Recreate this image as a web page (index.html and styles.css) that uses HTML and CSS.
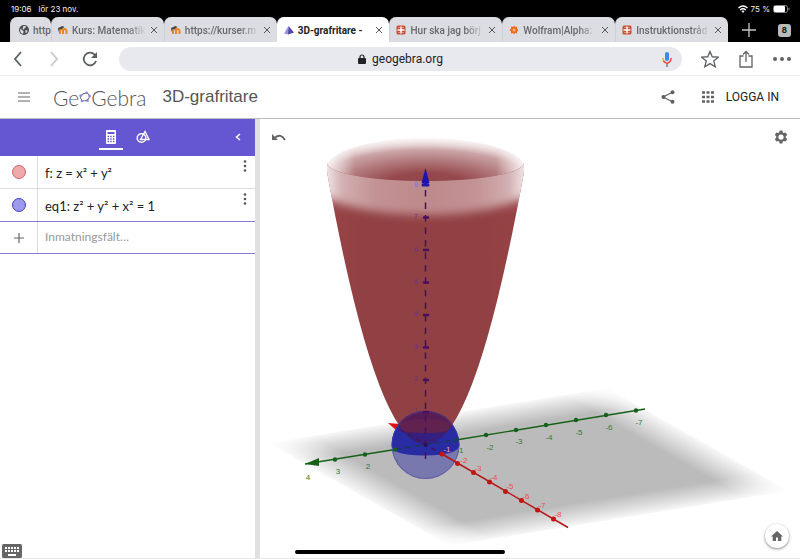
FILE: index.html
```html
<!DOCTYPE html>
<html lang="sv">
<head>
<meta charset="utf-8">
<meta name="viewport" content="width=device-width, initial-scale=1">
<title>3D-grafritare - GeoGebra</title>
<link rel="stylesheet" href="styles.css">
</head>
<body>
<div class="status">
  <span class="status-time">19:06</span><span>lör 23 nov.</span>
  <span class="status-right">
    <svg width="10" height="8" viewBox="0 0 20 16" fill="none" stroke="#fff" stroke-width="3"><path d="M1 6Q10-2 19 6M4.500 10Q10 5 15.500 10"/><path d="M7 12Q10 9.500 13 12L10 16z" fill="#fff" stroke="none"/></svg>
    75 %
    <svg width="17" height="8" viewBox="0 0 17 8"><rect x=".5" y=".5" width="14" height="7" rx="2" fill="none" stroke="#888"/><rect x="1" y="1" width="11" height="6" rx="1" fill="#fff"/><path d="M16 3v2" stroke="#888"/></svg>
  </span>
</div>

<nav class="tabs">
  <div class="tab tab-cut">
    <svg class="fav" viewBox="0 0 20 20"><circle cx="10" cy="10" r="10" fill="#4c4e52"/><path d="M3 7l4 4 2 1v3l-2 3C3 16 1 12 3 7zM9 2h4l1 3-3 1-1 3-3-1 1-3zM13 10l4 1-1 4-3 1z" fill="#dcdde3"/></svg>
    <a class="tab-title" href="#">http</a>
  </div>
  <div class="tab">
    <svg class="fav" viewBox="0 0 20 20"><path d="M4 18v-7q0-3 3-3t3 3v7m0-7q0-3 3-3t4 3v7" fill="none" stroke="#e98427" stroke-width="4"/><path d="M0 6l9-4 4 2-6 4-5 1v4H1z" fill="#444"/></svg>
    <a class="tab-title" href="#">Kurs: Matematik</a>
    <button class="close" aria-label="Stäng flik"><svg viewBox="0 0 8 8"><path d="M1 1l6 6M7 1L1 7"/></svg></button>
  </div>
  <div class="tab">
    <svg class="fav" viewBox="0 0 20 20"><path d="M4 18v-7q0-3 3-3t3 3v7m0-7q0-3 3-3t4 3v7" fill="none" stroke="#e98427" stroke-width="4"/><path d="M0 6l9-4 4 2-6 4-5 1v4H1z" fill="#444"/></svg>
    <a class="tab-title" href="#">https://kurser.m</a>
    <button class="close" aria-label="Stäng flik"><svg viewBox="0 0 8 8"><path d="M1 1l6 6M7 1L1 7"/></svg></button>
  </div>
  <div class="tab active">
    <svg class="fav" viewBox="0 0 20 20"><path d="M9 2L0 17l8 2z" fill="#9b94e6"/><path d="M9 2l11 13-12 4z" fill="#4d43a8"/></svg>
    <a class="tab-title" href="#">3D-grafritare -</a>
    <button class="close" aria-label="Stäng flik"><svg viewBox="0 0 8 8"><path d="M1 1l6 6M7 1L1 7"/></svg></button>
  </div>
  <div class="tab">
    <svg class="fav" viewBox="0 0 20 20"><rect x="1" y="1" width="18" height="18" rx="3" fill="#c94f32"/><path d="M3 10h14M10 3v14" stroke="#fff" stroke-width="3"/><path d="M4 5h4M12 5h4M4 15h4M12 15h4" stroke="#f3d3c8"/></svg>
    <a class="tab-title" href="#">Hur ska jag börj</a>
    <button class="close" aria-label="Stäng flik"><svg viewBox="0 0 8 8"><path d="M1 1l6 6M7 1L1 7"/></svg></button>
  </div>
  <div class="tab">
    <svg class="fav" viewBox="0 0 20 20"><path d="M10 1l2 3 4-1v4l3 3-3 3v4l-4-1-2 3-2-3-4 1v-4l-3-3 3-3V3l4 1z" fill="#f26a1b"/><circle cx="10" cy="10" r="3" fill="#f7b286"/></svg>
    <a class="tab-title" href="#">Wolfram|Alpha:</a>
    <button class="close" aria-label="Stäng flik"><svg viewBox="0 0 8 8"><path d="M1 1l6 6M7 1L1 7"/></svg></button>
  </div>
  <div class="tab">
    <svg class="fav" viewBox="0 0 20 20"><rect x="1" y="1" width="18" height="18" rx="3" fill="#c94f32"/><path d="M3 10h14M10 3v14" stroke="#fff" stroke-width="3"/><path d="M4 5h4M12 5h4M4 15h4M12 15h4" stroke="#f3d3c8"/></svg>
    <a class="tab-title" href="#">Instruktionstråd</a>
    <button class="close" aria-label="Stäng flik"><svg viewBox="0 0 8 8"><path d="M1 1l6 6M7 1L1 7"/></svg></button>
  </div>
  <div class="tab-tools">
    <button aria-label="Ny flik"><svg width="14" height="14" viewBox="0 0 14 14"><path d="M7 0v14M0 7h14" stroke="#c8c8cc" stroke-width="1.300"/></svg></button>
    <button class="tab-count">8</button>
  </div>
</nav>

<div class="toolbar">
  <button aria-label="Bakåt"><svg width="10" height="16" viewBox="0 0 10 16" fill="none" stroke="#5c5f63" stroke-width="1.800"><path d="M8 1L2 8l6 7"/></svg></button>
  <button aria-label="Framåt"><svg width="10" height="16" viewBox="0 0 10 16" fill="none" stroke="#c8c9cc" stroke-width="1.800"><path d="M2 1l6 7-6 7"/></svg></button>
  <button aria-label="Ladda om"><svg width="16" height="16" viewBox="0 0 16 16"><path d="M14 10A6.300 6.300 0 1 1 12.500 3.500L14 5" fill="none" stroke="#5c5f63" stroke-width="1.800"/><path d="M15 1v6H9z" fill="#5c5f63"/></svg></button>
  <div class="omnibox">
    <svg width="8" height="10" viewBox="0 0 8 10"><rect y="4" width="8" height="6" rx="1" fill="#222"/><path d="M2 5V3a2 2 0 0 1 4 0v2" fill="none" stroke="#222" stroke-width="1.200"/></svg>
    <input type="text" value="geogebra.org" aria-label="Adress">
    <button class="mic" aria-label="Röstsökning"><svg width="10" height="15" viewBox="0 0 10 15" fill="none"><rect x="3" width="4" height="9" rx="2" fill="#4285f4"/><path d="M1 6q0 2 1 4" stroke="#f4b400" stroke-width="1.500"/><path d="M1.500 9Q5 13 8 9.500" stroke="#ea4335" stroke-width="1.500"/><path d="M8 9.500Q9 8 9 6" stroke="#ea4335" stroke-width="1.500"/><path d="M5 11.500V15" stroke="#777" stroke-width="1.500"/></svg></button>
  </div>
  <button aria-label="Bokmärke"><svg width="18" height="18" viewBox="0 0 24 24"><path d="M12 2l3 7 8 .6-6 5.200 2 7.600-7-4.200-7 4.200 2-7.600-6-5.200L9 9z" fill="none" stroke="#606367" stroke-width="1.800"/></svg></button>
  <button aria-label="Dela sida"><svg width="14" height="18" viewBox="0 0 14 18" fill="none" stroke="#606367" stroke-width="1.300"><path d="M4.500 6H1v11h12V6H9.500M7 12V1.500M4 4.500l3-3 3 3"/></svg></button>
  <button aria-label="Mer"><svg width="18" height="4" viewBox="0 0 18 4" fill="#606367"><circle cx="2" cy="2" r="2"/><circle cx="9" cy="2" r="2"/><circle cx="16" cy="2" r="2"/></svg></button>
</div>

<header class="app-header">
  <button class="menu" aria-label="Meny"><svg width="12" height="10" viewBox="0 0 12 10"><path d="M0 1h12M0 5h12M0 9h12" stroke="#666" stroke-width="1.200"/></svg></button>
  <a class="logo" href="#" aria-label="GeoGebra"><span>Ge</span><svg width="12" height="12" viewBox="0 0 12 12"><ellipse cx="6" cy="6" rx="4.500" ry="3.600" transform="rotate(-25 6 6)" fill="none" stroke="#666"/><g fill="#8b85e8"><circle cx="7.500" cy="1.800" r="1.300"/><circle cx="10.600" cy="5" r="1.300"/><circle cx="8.500" cy="9.800" r="1.300"/><circle cx="3" cy="10" r="1.300"/><circle cx="1.500" cy="4.800" r="1.300"/></g></svg><span>Gebra</span></a>
  <h1>3D-grafritare</h1>
  <button class="share" aria-label="Dela"><svg width="14" height="14" viewBox="0 0 14 14"><path d="M12 2L2 7l10 5" fill="none" stroke="#606060" stroke-width="1.200"/><g fill="#606060"><circle cx="11.500" cy="2.200" r="2"/><circle cx="2.500" cy="7" r="2"/><circle cx="11.500" cy="11.800" r="2"/></g></svg></button>
  <button class="apps" aria-label="Appar"><svg width="12" height="12" viewBox="0 0 12 12"><path d="M0 1.500h12M0 6h12M0 10.500h12" stroke="#606060" stroke-width="2.600" stroke-dasharray="3 1.500"/></svg></button>
  <a class="login" href="#">LOGGA IN</a>
</header>

<main class="workspace">
  <section class="algebra">
    <div class="algebra-bar">
      <button class="view selected" aria-label="Algebra"><svg width="10" height="14" viewBox="0 0 10 14"><rect width="10" height="14" rx="1" fill="#fff"/><path d="M1.500 3h7" stroke="#6557d2" stroke-width="2"/><path d="M1.500 6.500h7M1.500 9h7M1.500 11.500h7" stroke="#6557d2" stroke-width="1.300" stroke-dasharray="1.500 1.200"/></svg></button>
      <button class="view" aria-label="Verktyg"><svg width="14" height="14" viewBox="0 0 14 14" fill="none" stroke="#fff" stroke-width="1.400"><circle cx="5.500" cy="8" r="4.300"/><path d="M9 1.500L4.500 9.500h8.500z"/></svg></button>
      <button class="collapse" aria-label="Dölj"><svg width="6" height="8" viewBox="0 0 6 8"><path d="M5 1L1.500 4 5 7" fill="none" stroke="#fff" stroke-width="1.500"/></svg></button>
    </div>
    <div class="row">
      <div class="mark"><button class="dot red" aria-label="Visa f"></button></div>
      <div class="formula">f: z = x² + y²</div>
      <button class="more" aria-label="Mer om f"><svg width="4" height="12" viewBox="0 0 4 12" fill="#555"><circle cx="2" cy="1.500" r="1.300"/><circle cx="2" cy="6" r="1.300"/><circle cx="2" cy="10.500" r="1.300"/></svg></button>
    </div>
    <div class="row">
      <div class="mark"><button class="dot blue" aria-label="Visa eq1"></button></div>
      <div class="formula">eq1: z² + y² + x² = 1</div>
      <button class="more" aria-label="Mer om eq1"><svg width="4" height="12" viewBox="0 0 4 12" fill="#555"><circle cx="2" cy="1.500" r="1.300"/><circle cx="2" cy="6" r="1.300"/><circle cx="2" cy="10.500" r="1.300"/></svg></button>
    </div>
    <div class="row entry">
      <label class="mark" for="entry"><svg width="10" height="10" viewBox="0 0 10 10"><path d="M5 0v10M0 5h10" stroke="#666" stroke-width="1.200"/></svg></label>
      <input id="entry" type="text" placeholder="Inmatningsfält…" aria-label="Inmatningsfält">
    </div>
    <button class="keyboard" aria-label="Tangentbord"><svg width="20" height="14" viewBox="0 0 20 14"><rect width="20" height="14" rx="1.500" fill="#666"/><path d="M3 4h14M3 7h14" stroke="#fff" stroke-width="2" stroke-dasharray="2 1"/><path d="M6 11h8" stroke="#fff" stroke-width="2"/></svg></button>
  </section>

  <section class="scene">
    <svg class="graph" viewBox="260 120 540 437" role="img" aria-label="3D-graf">
      <defs>
        <linearGradient id="fadeU"><stop offset="0" stop-color="#bbb" stop-opacity=".1"/><stop offset=".05" stop-color="#bbb" stop-opacity=".45"/><stop offset=".13" stop-color="#bbb"/><stop offset=".87" stop-color="#bbb"/><stop offset=".95" stop-color="#bbb" stop-opacity=".45"/><stop offset="1" stop-color="#bbb" stop-opacity=".1"/></linearGradient>
        <linearGradient id="fadeV" x2="0" y2="1"><stop offset="0" stop-color="#fff" stop-opacity=".1"/><stop offset=".07" stop-color="#fff" stop-opacity=".5"/><stop offset=".17" stop-color="#fff"/><stop offset=".83" stop-color="#fff"/><stop offset=".93" stop-color="#fff" stop-opacity=".5"/><stop offset="1" stop-color="#fff" stop-opacity=".1"/></linearGradient>
        <mask id="planeMask" maskContentUnits="objectBoundingBox"><rect width="1" height="1" fill="url(#fadeV)"/></mask>
        <radialGradient id="inner" gradientUnits="userSpaceOnUse" cx="0" cy="0" r="1" gradientTransform="translate(425.500 188) scale(150 51)"><stop offset="0" stop-color="#914447"/><stop offset=".3" stop-color="#96494d"/><stop offset=".55" stop-color="#b27a7d"/><stop offset=".75" stop-color="#cba5a7"/><stop offset="1" stop-color="#f6eeee" stop-opacity=".3"/></radialGradient>
        <linearGradient id="sides" gradientUnits="userSpaceOnUse" x1="327" x2="524" y1="0" y2="0"><stop offset="0" stop-color="#fff" stop-opacity=".8"/><stop offset=".14" stop-color="#fff" stop-opacity="0"/><stop offset=".86" stop-color="#fff" stop-opacity="0"/><stop offset="1" stop-color="#fff" stop-opacity=".8"/></linearGradient>
        <linearGradient id="cup" x2="1"><stop offset="0" stop-color="#9c4649"/><stop offset=".2" stop-color="#914043"/><stop offset=".8" stop-color="#914043"/><stop offset="1" stop-color="#9a4447"/></linearGradient>
        <linearGradient id="band" gradientUnits="userSpaceOnUse" x1="327" x2="524" y1="0" y2="0"><stop offset="0" stop-color="#f1e7e8"/><stop offset=".07" stop-color="#d3b0b2"/><stop offset=".25" stop-color="#c29193"/><stop offset=".5" stop-color="#be8a8b"/><stop offset=".75" stop-color="#c29193"/><stop offset=".93" stop-color="#d3b0b2"/><stop offset="1" stop-color="#f1e7e8"/></linearGradient>
        <filter id="soft" x="-20%" y="-60%" width="140%" height="220%"><feGaussianBlur stdDeviation="5"/></filter>
        <clipPath id="cupClip"><path d="M327 163A98.500 18 0 0 0 524 163L524 172Q425.500 718 327 172z"/></clipPath>
        <clipPath id="paraClip"><path d="M327 172Q425.500 718 524 172z"/></clipPath>
        <clipPath id="ballClip"><circle cx="425.500" cy="445" r="34"/></clipPath>
      </defs>

      <!-- ground plane: a unit square sheared into perspective -->
      <rect width="1" height="1" transform="matrix(339 -55 182 103 268 443)" fill="url(#fadeU)" mask="url(#planeMask)"/>

      <g stroke="#166116" stroke-width="1.400" fill="#166116">
        <path d="M305 464L395 449.500M459 439.500L645 409"/>
        <path d="M305 464l14-6v8z" stroke="none"/>
      </g>
      <path d="M388 423l12 1-3 7z" fill="#e01515"/>

      <path d="M327 168A98.500 30 0 0 1 524 168L524 164A98.500 18 0 0 1 327 164z" fill="url(#inner)"/>
      <path d="M327 168A98.500 30 0 0 1 524 168L524 164A98.500 18 0 0 1 327 164z" fill="url(#sides)"/>
      <g clip-path="url(#cupClip)">
        <path d="M320 150h210v300H320z" fill="url(#cup)"/>
        <path d="M300 120H550V180C530 203 480 215 425.500 215S320 203 300 180z" fill="url(#band)" filter="url(#soft)"/>
      </g>

      <!-- sphere, with the part inside the paraboloid darkened -->
      <circle cx="425.500" cy="445" r="34" fill="#5858a8" opacity=".68"/>
      <g clip-path="url(#ballClip)">
        <path d="M391 410h69v35q-2 10-34.500 10.500T391 445z" fill="#292ba2"/>
        <g clip-path="url(#paraClip)">
          <path d="M385 405h80v50h-80z" fill="#352080"/>
          <path d="M385 405h80v24q-8 4-39.500 4T385 429z" fill="#571d52"/>
          <ellipse cx="425.500" cy="426" rx="28" ry="7" fill="#672650" opacity=".6"/>
        </g>
      </g>
      <circle cx="425.500" cy="445" r="33.500" fill="none" stroke="#4545a0" stroke-width=".8" opacity=".7"/>

      <path d="M395 449.500L459 439.500" stroke="#153c53" stroke-width="1.400" stroke-dasharray="6 4"/>
      <path d="M400 430L442 454" stroke="#451552" stroke-width="1.400" stroke-dasharray="5 4"/>
      <path d="M425.500 190V464" stroke="#46105c" stroke-width="1.500" stroke-dasharray="6.500 6"/>
      <path d="M425.500 168l4 15q-4 2-8 0z" fill="#1d13b4"/>
      <path d="M423 185h5" stroke="#2418a6" stroke-width="3" stroke-linecap="round"/>
      <path d="M424 217.500h4M424 250h4M424 282.500h4M424 315h4M424 347.500h4M424 380h4M424 412h4" stroke="#4b0d62" stroke-width="2.500" stroke-linecap="round"/>
      <g class="z-labels"><text class="z-top" x="416" y="187">8</text><text x="416" y="219">7</text><text x="416" y="252">6</text><text x="416" y="284">5</text><text x="416" y="316">4</text><text x="416" y="349">3</text><text x="416" y="381">2</text><text x="416" y="413">1</text></g>

      <g fill="#12601a"><circle cx="335" cy="459.500" r="2.200"/><circle cx="365" cy="454.500" r="2.200"/><circle cx="395" cy="449.500" r="2.200"/><circle cx="456" cy="440" r="2.200" fill="#163f5c"/><circle cx="486" cy="435" r="2.200"/><circle cx="516" cy="430" r="2.200"/><circle cx="546" cy="425" r="2.200"/><circle cx="576" cy="420" r="2.200"/><circle cx="606" cy="415" r="2.200"/><circle cx="636" cy="410.500" r="2.200"/><circle cx="425.500" cy="445" r="2" fill="#27105c"/></g>
      <g class="y-labels"><text x="308" y="480">4</text><text x="338" y="474">3</text><text x="368" y="469">2</text><text x="398" y="465" opacity=".35">1</text><text x="460" y="453">-1</text><text x="490" y="450">-2</text><text x="519" y="444">-3</text><text x="549" y="440">-4</text><text x="579" y="435">-5</text><text x="609" y="430">-6</text><text x="639" y="425">-7</text></g>

      <path d="M442 454L568 527.500" stroke="#b51616" stroke-width="1.500"/>
      <g fill="#c01616"><circle cx="442" cy="454" r="2.500"/><circle cx="457.500" cy="463.500" r="2.500"/><circle cx="473.500" cy="472.500" r="2.500"/><circle cx="489.500" cy="482" r="2.500"/><circle cx="505.500" cy="491.500" r="2.500"/><circle cx="521.500" cy="500.500" r="2.500"/><circle cx="537.500" cy="510" r="2.500"/><circle cx="553.500" cy="519" r="2.500"/></g>
      <g class="x-labels"><text class="x-first" x="447" y="452">-1</text><text x="464" y="463">-2</text><text x="478" y="471">-3</text><text x="494" y="480">-4</text><text x="510" y="489">-5</text><text x="526" y="499">-6</text><text x="542" y="508">-7</text><text x="558" y="517">-8</text></g>
    </svg>
    <button class="undo" aria-label="Ångra"><svg width="14" height="8" viewBox="0 0 14 8"><path d="M3 4.500Q9 0 13 7" fill="none" stroke="#666" stroke-width="1.800"/><path d="M0 1v6h6z" fill="#666"/></svg></button>
    <button class="settings" aria-label="Inställningar"><svg width="14" height="14" viewBox="0 0 24 24"><path fill="#666" fill-rule="evenodd" d="M9.500 1h5l.6 3.200 2 1.100 3-1.100 2.500 4.300-2.400 2.100v2.600l2.400 2.300-2.500 4.300-3-1.100-2 1.100-.6 3.200h-5l-.6-3.200-2-1.100-3 1.100-2.500-4.300 2.400-2.300v-2.600L1.400 8.500l2.500-4.300 3 1.100 2-1.100zM12 7.500a4.500 4.500 0 1 0 0 9a4.500 4.500 0 1 0 0-9z"/></svg></button>
    <button class="home" aria-label="Standardvy"><svg width="12" height="10" viewBox="0 0 12 10"><path d="M6 0L0 5.500h1.700V10H5V6.500h2V10h3.300V5.500H12z" fill="#666"/></svg></button>
  </section>
</main>
<div class="home-indicator"></div>
</body>
</html>
```
FILE: styles.css
```css
* { box-sizing: border-box; }
body {
  margin: 0;
  min-height: 100vh;
  display: flex;
  flex-direction: column;
  font-family: Inter, "Liberation Sans", sans-serif;
  background: #fff;
  border-bottom: 1px solid #e6e6e6;
  position: relative;
}
button {
  border: 0;
  padding: 0;
  margin: 0;
  background: none;
  font: inherit;
  color: inherit;
  display: flex;
  align-items: center;
  justify-content: center;
}
a { color: inherit; text-decoration: none; }
svg { display: block; flex: none; }
input {
  border: 0;
  padding: 0;
  margin: 0;
  background: none;
  outline: 0;
  min-width: 0;
}

.status {
  background: #000;
  color: #f0f0f0;
  height: 17px;
  display: flex;
  align-items: center;
  padding: 0 10px 0 11px;
  font-size: 8px;
}
.status-time { margin-right: 7px; }
.status-right { margin-left: auto; display: flex; align-items: center; gap: 3px; }

.tabs {
  height: 25px;
  background: #000;
  display: flex;
  padding-left: 10px;
}
.tab {
  flex: 1 1 0;
  min-width: 0;
  display: flex;
  align-items: center;
  gap: 4px;
  padding: 1px 6px 0 6px;
  background: #dcdde3;
  border-left: 1px solid #cfd0d6;
  border-radius: 7px 7px 0 0;
  font-family: Roboto, sans-serif;
  font-size: 10px;
  font-weight: 500;
  color: #66686d;
}
.tab-cut { flex: 0 0 41px; padding: 1px 0 0 8px; }
.tab.active { background: #fff; border-color: #fff; color: #222; font-weight: 700; }
.fav { width: 10px; height: 10px; }
.tab-title {
  flex: 1;
  min-width: 0;
  overflow: hidden;
  white-space: nowrap;
  mask-image: linear-gradient(to right, #000 75%, transparent);
}
.tab-cut .tab-title, .active .tab-title { mask-image: none; }
.close { width: 8px; height: 16px; stroke: #55575b; stroke-width: 1; }
.close svg { width: 8px; height: 8px; }
.tab-tools {
  flex: 0 0 72px;
  display: flex;
  align-items: center;
  justify-content: flex-end;
  gap: 22px;
  padding: 1px 9px 0 0;
}
.tab-count {
  width: 13px;
  height: 13px;
  border-radius: 3px;
  background: #b9b9bc;
  color: #111;
  font-size: 8px;
  font-weight: 700;
}

.toolbar {
  height: 34px;
  display: flex;
  align-items: center;
  border-bottom: 1px solid #eee;
}
.toolbar > button { width: 36px; height: 32px; }
.omnibox {
  flex: 1;
  height: 24px;
  margin: 0 10px 0 11px;
  border-radius: 12px;
  background: #e8e9ee;
  display: flex;
  align-items: center;
  justify-content: center;
  gap: 6px;
  position: relative;
}
.omnibox input { font: 12px Roboto, sans-serif; color: #222; field-sizing: content; }
.mic { position: absolute; right: 10px; top: 5px; }

.app-header {
  height: 43px;
  display: flex;
  align-items: center;
  padding: 0 21px 0 18px;
  border-bottom: 1px solid #bdbdbd;
  color: #555;
}
.menu { width: 12px; height: 24px; margin-right: 23px; }
.logo {
  display: flex;
  align-items: center;
  font: 300 21px Lato, sans-serif;
  color: #555;
  margin-right: 16px;
}
.app-header h1 { margin: 0; font: 400 17px "Liberation Sans", sans-serif; color: #555; }
.share { margin-left: auto; margin-right: 27px; }
.apps { margin-right: 12px; }
.login { font: 12px Roboto, sans-serif; color: #222; white-space: nowrap; }

.workspace { flex: 1; display: flex; min-height: 0; }
.algebra {
  flex: 0 0 calc(32% - 1px);
  position: relative;
  display: flex;
  flex-direction: column;
}
.algebra-bar {
  height: 37px;
  background: #6557d2;
  display: flex;
  justify-content: center;
  gap: 8px;
  padding-right: 2px;
  position: relative;
}
.view { width: 24px; height: 31px; padding-top: 6px; border-bottom: 2px solid transparent; }
.view.selected { border-color: #fff; }
.collapse { position: absolute; right: 14px; top: 10px; width: 6px; height: 16px; }
.row {
  height: 33px;
  display: flex;
  border-bottom: 1px solid #ddd;
}
.row:nth-child(3) { border-bottom-color: #8478dc; }
.mark {
  width: 38px;
  border-right: 1px solid #ddd;
  display: flex;
  align-items: center;
  justify-content: center;
}
.dot { width: 14px; height: 14px; border-radius: 50%; border: 1px solid; }
.red { background: #f0a9ab; border-color: #c86468; }
.blue { background: #9c99ef; border-color: #453fbb; }
.formula { flex: 1; padding-left: 7px; line-height: 34px; font-family: Lato, sans-serif; font-size: 13px; color: #222; }
.more { width: 20px; height: 20px; }
.entry { height: 32px; border-bottom-color: #8478dc; }
.entry input { flex: 1; padding: 0 0 2px 7px; font: 12px Lato, sans-serif; }
.entry input::placeholder { color: #999; opacity: 1; }
.keyboard { position: absolute; left: 2px; bottom: 0; }

.scene {
  flex: 1;
  min-width: 0;
  position: relative;
  border-left: 5px solid #e0e0e0;
}
.graph { position: absolute; inset: 0; width: 100%; height: 100%; }
#planeMask { mask-type: alpha; }
.graph text { font: 8px "Liberation Sans", sans-serif; text-anchor: middle; }
.y-labels { fill: #317a35; }
.x-labels { fill: #f04c50; }
.graph .x-first { fill: #ff9bb0; }
.z-labels { fill: #67358e; }
.graph .z-labels text { font-size: 7px; }
.graph .z-top { fill: #7a6cff; }
.undo { position: absolute; left: 12px; top: 14px; }
.settings { position: absolute; right: 12px; top: 11px; }
.home {
  position: absolute;
  right: 11px;
  bottom: 10px;
  width: 24px;
  height: 24px;
  border-radius: 50%;
  background: #fff;
  box-shadow: 0 1px 3px #888;
}
.home-indicator {
  position: absolute;
  left: 50%;
  bottom: 4px;
  width: 210px;
  height: 4px;
  margin-left: -105px;
  border-radius: 2px;
  background: #000;
}
```
